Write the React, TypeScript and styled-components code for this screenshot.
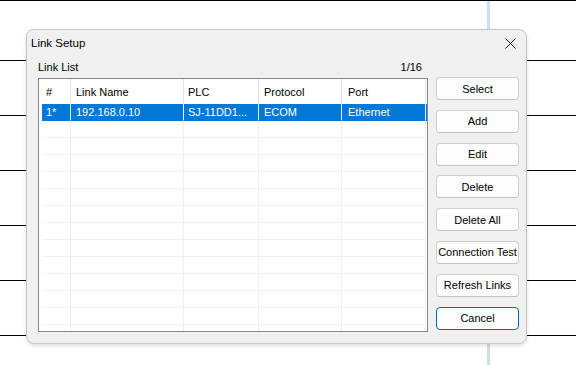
import React from "react";
import styled, { createGlobalStyle } from "styled-components";

const Global = createGlobalStyle`
  html, body { margin: 0; padding: 0; background: #fff; }
  body {
    font-family: "Liberation Sans", Arial, sans-serif;
    font-size: 11px;
    color: #000;
  }
`;

const Canvas = styled.div`
  position: relative;
  width: 576px;
  height: 365px;
  box-sizing: border-box;
  border-top: 1px solid #000;
  padding-top: 5px;
  overflow: hidden;
  background: linear-gradient(
    90deg,
    transparent 487px,
    #cde0f0 487px,
    #cde0f0 490px,
    transparent 490px
  );
  display: flex;
  flex-direction: column;
`;

const Rung = styled.div`
  flex: none;
  height: 55px;
  box-sizing: border-box;
  border-bottom: 1px solid #000;
`;

const Dialog = styled.div`
  position: absolute;
  left: 26px;
  top: 28px;
  width: 501px;
  height: 315px;
  box-sizing: border-box;
  background: #f0f0f0;
  border: 1px solid #c6c6c6;
  border-radius: 8px;
  box-shadow: 0 2px 4px rgba(0, 0, 0, 0.12);
  display: flex;
  flex-direction: column;
`;

const TitleBar = styled.div`
  flex: none;
  height: 26px;
  display: flex;
  align-items: center;
  justify-content: space-between;
  padding: 0 10px 0 4px;
`;

const Title = styled.span`
  font-size: 11.5px;
`;

const CloseBtn = styled.span`
  display: flex;
  width: 11px;
  height: 11px;
`;

const Body = styled.div`
  flex: 1;
  min-height: 0;
  display: flex;
  gap: 8px;
  padding: 0 7px 11px 11px;
`;

const ListPanel = styled.div`
  width: 390px;
  display: flex;
  flex-direction: column;
`;

const ListHeader = styled.div`
  flex: none;
  height: 22px;
  display: flex;
  align-items: center;
  justify-content: space-between;
  padding-right: 6px;
`;

const Table = styled.div`
  flex: 1;
  min-height: 0;
  box-sizing: border-box;
  border: 1px solid #828790;
  background: #fff;
  padding-left: 3px;
  overflow: hidden;
`;

const COLS = "29px 113px 75px 83px 84px";

const HeaderRow = styled.div`
  display: grid;
  grid-template-columns: ${COLS};
  height: 25px;
`;

const HeaderCell = styled.div<{ $pad?: number }>`
  display: flex;
  align-items: center;
  padding-left: ${(p) => p.$pad ?? 5}px;
  border-right: 1px solid #e5e5e5;
  white-space: nowrap;
`;

const Row = styled.div<{ $selected?: boolean }>`
  display: grid;
  grid-template-columns: ${COLS};
  height: 17px;
  box-sizing: border-box;
  background: ${(p) => (p.$selected ? "#0078d7" : "#fff")};
  color: ${(p) => (p.$selected ? "#fff" : "#000")};
`;

const Cell = styled.div<{ $selected?: boolean; $pad?: number }>`
  display: flex;
  align-items: center;
  box-sizing: border-box;
  padding-left: ${(p) => p.$pad ?? 5}px;
  border-right: 1px solid ${(p) => (p.$selected ? "#e8f1fb" : "#f0f0f0")};
  border-bottom: 1px solid ${(p) => (p.$selected ? "#0078d7" : "#f0f0f0")};
  white-space: nowrap;
  overflow: hidden;
`;

const ButtonColumn = styled.div`
  width: 83px;
  display: flex;
  flex-direction: column;
  gap: 9.8px;
  padding-top: 21px;
`;

const Button = styled.button<{ $default?: boolean }>`
  height: 23px;
  flex: none;
  box-sizing: border-box;
  padding: 0;
  font-family: "Liberation Sans", Arial, sans-serif;
  font-size: 11px;
  color: #000;
  background: #fdfdfd;
  border: 1px solid ${(p) => (p.$default ? "#0067c0" : "#d0d0d0")};
  border-bottom-color: ${(p) => (p.$default ? "#0067c0" : "#c2c2c2")};
  border-radius: 4px;
  white-space: nowrap;
`;

const columns = [
  { label: "#", pad: 4 },
  { label: "Link Name", pad: 5 },
  { label: "PLC", pad: 4 },
  { label: "Protocol", pad: 5 },
  { label: "Port", pad: 6 },
];

const firstRow = ["1*", "192.168.0.10", "SJ-11DD1...", "ECOM", "Ethernet"];

const buttons = [
  "Select",
  "Add",
  "Edit",
  "Delete",
  "Delete All",
  "Connection Test",
  "Refresh Links",
];

export default function App() {
  const emptyRows = Array.from({ length: 13 });
  return (
    <>
      <Global />
      <Canvas>
        {Array.from({ length: 6 }).map((_, i) => (
          <Rung key={i} />
        ))}
        <Dialog>
          <TitleBar>
            <Title>Link Setup</Title>
            <CloseBtn>
              <svg width="11" height="11" viewBox="0 0 11 11">
                <path d="M0.5 0.5 L10.5 10.5 M10.5 0.5 L0.5 10.5" stroke="#1a1a1a" strokeWidth="1" fill="none" />
              </svg>
            </CloseBtn>
          </TitleBar>
          <Body>
            <ListPanel>
              <ListHeader>
                <span>Link List</span>
                <span>1/16</span>
              </ListHeader>
              <Table>
                <HeaderRow>
                  {columns.map((c) => (
                    <HeaderCell key={c.label} $pad={c.pad}>
                      {c.label}
                    </HeaderCell>
                  ))}
                </HeaderRow>
                <Row $selected>
                  {firstRow.map((v, i) => (
                    <Cell key={i} $selected $pad={columns[i].pad}>
                      {v}
                    </Cell>
                  ))}
                </Row>
                {emptyRows.map((_, r) => (
                  <Row key={r}>
                    {columns.map((c, i) => (
                      <Cell key={i} $pad={c.pad} />
                    ))}
                  </Row>
                ))}
              </Table>
            </ListPanel>
            <ButtonColumn>
              {buttons.map((b) => (
                <Button key={b}>{b}</Button>
              ))}
              <Button $default>Cancel</Button>
            </ButtonColumn>
          </Body>
        </Dialog>
      </Canvas>
    </>
  );
}
